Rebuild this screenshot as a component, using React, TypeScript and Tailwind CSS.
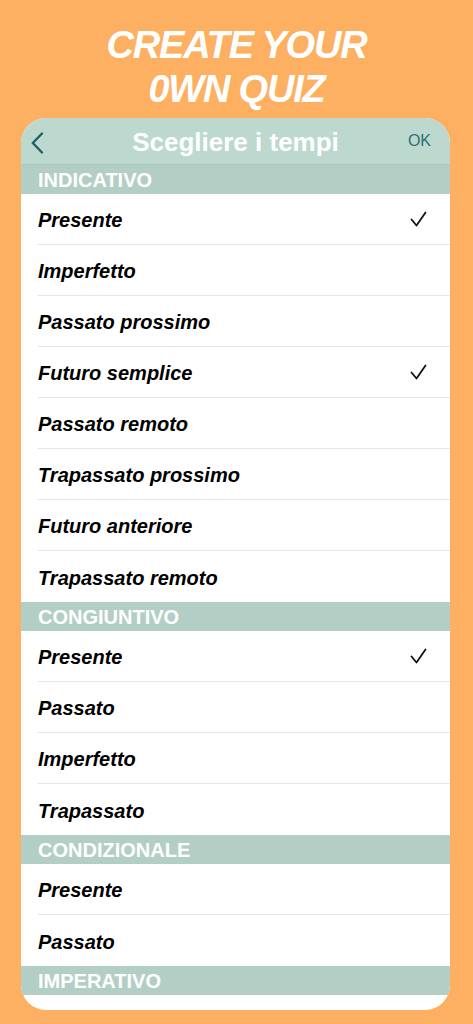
import React from 'react';

type Tense = { label: string; checked?: boolean };
type Section = { title: string; items: Tense[] };

const SECTIONS: Section[] = [
  {
    title: 'INDICATIVO',
    items: [
      { label: 'Presente', checked: true },
      { label: 'Imperfetto' },
      { label: 'Passato prossimo' },
      { label: 'Futuro semplice', checked: true },
      { label: 'Passato remoto' },
      { label: 'Trapassato prossimo' },
      { label: 'Futuro anteriore' },
      { label: 'Trapassato remoto' },
    ],
  },
  {
    title: 'CONGIUNTIVO',
    items: [
      { label: 'Presente', checked: true },
      { label: 'Passato' },
      { label: 'Imperfetto' },
      { label: 'Trapassato' },
    ],
  },
  {
    title: 'CONDIZIONALE',
    items: [{ label: 'Presente' }, { label: 'Passato' }],
  },
  { title: 'IMPERATIVO', items: [] },
];

const Check = () => (
  <svg width="17" height="17" viewBox="0 0 17 17" fill="none">
    <path d="M1.5 8.5 L6.5 14.5 L15.5 1.5" stroke="#111" strokeWidth="1.8" strokeLinecap="round" strokeLinejoin="round" />
  </svg>
);

const Chevron = () => (
  <svg width="13" height="22" viewBox="0 0 13 22" fill="none">
    <path d="M11 1.5 L1.8 11 L11 20.5" stroke="#1d6262" strokeWidth="2.4" strokeLinecap="round" strokeLinejoin="round" />
  </svg>
);

const App: React.FC = () => {
  return (
    <div className="w-[473px] h-[1024px] bg-[#fdb062] overflow-hidden font-['Liberation_Sans',Arial,sans-serif]">
      <h1 className="pt-[23px] mb-[7px] text-center text-white font-bold italic text-[38px] leading-[44px] tracking-[-1.2px]">
        CREATE YOUR
        <br />
        0WN QUIZ
      </h1>

      <div className="ml-[21px] w-[429px] bg-white rounded-[25px] overflow-hidden">
        {/* nav bar */}
        <div className="h-[47px] bg-[#bdd8cf] border-b border-[#a9c7be] flex items-center relative">
          <div className="absolute left-[10px] top-[14px]">
            <Chevron />
          </div>
          <div className="flex-1 text-center text-white font-bold text-[26px] leading-[30px] pt-[1px]">
            Scegliere i tempi
          </div>
          <div className="absolute right-[19px] top-[13px] text-[#2a7171] text-[16px] leading-[20px]">OK</div>
        </div>

        {SECTIONS.map((section) => (
          <div key={section.title}>
            <div className="h-[29px] bg-[#b3cfc5] pl-[17px] flex items-center text-white font-bold text-[20px] leading-[23px] pt-[1px]">
              {section.title}
            </div>
            {section.items.map((item, i) => (
              <div key={item.label + i} className="pl-[17px]">
                <div
                  className={
                    'h-[51px] pr-[23px] flex items-center justify-between ' +
                    (i < section.items.length - 1 ? 'border-b border-[#e5e5e5]' : '')
                  }
                >
                  <span className="text-black font-bold italic text-[20px] leading-[23px] pt-[3px]">{item.label}</span>
                  {item.checked && <Check />}
                </div>
              </div>
            ))}
          </div>
        ))}
        <div className="h-[15px]" />
      </div>
    </div>
  );
};

export default App;
